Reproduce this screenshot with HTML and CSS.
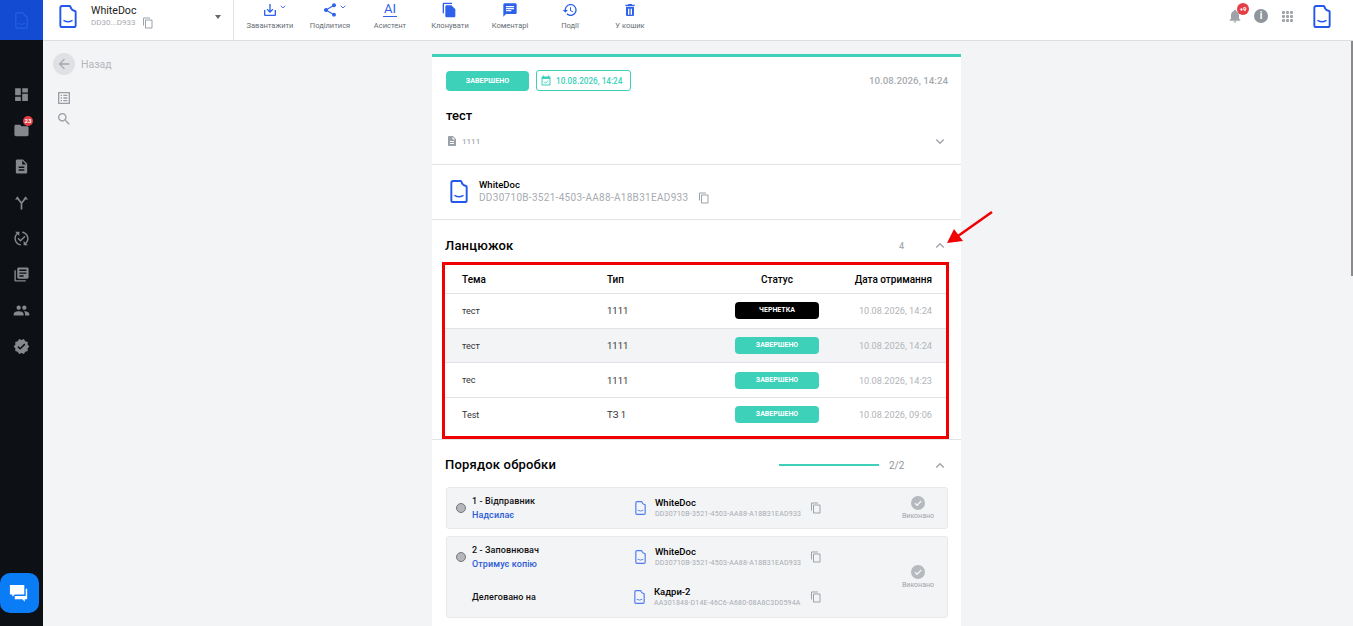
FILE: index.html
```html
<!DOCTYPE html>
<html lang="uk">
<head>
    <meta charset="UTF-8">
    <meta name="viewport" content="width=device-width, initial-scale=1.0">
    <title>WhiteDoc</title>
    <link rel="stylesheet" href="styles.css">
</head>
<body>
    <svg class="sprite" xmlns="http://www.w3.org/2000/svg">
        <symbol id="i-logo" viewBox="0 0 18 24"><path d="M3 1h7.5c.5 0 .8.3 1 .8.6 2.4 2.4 4 4.7 4.5.5.1.8.4.8.9V21a2 2 0 0 1-2 2H3a2 2 0 0 1-2-2V3a2 2 0 0 1 2-2z" fill="none" stroke="currentColor" stroke-width="2"/><path d="M4.8 16.2q4.2 2.4 8.4 0" fill="none" stroke="currentColor" stroke-width="1.5" stroke-linecap="round"/></symbol>
        <symbol id="i-copy" viewBox="0 0 24 24"><path d="M16 1H4c-1.1 0-2 .9-2 2v14h2V3h12V1zm3 4H8c-1.1 0-2 .9-2 2v14c0 1.1.9 2 2 2h11c1.1 0 2-.9 2-2V7c0-1.1-.9-2-2-2zm0 16H8V7h11v14z"/></symbol>
        <symbol id="i-doc" viewBox="0 0 24 24"><path d="M14 2H6c-1.1 0-1.99.9-1.99 2L4 20c0 1.1.89 2 1.99 2H18c1.1 0 2-.9 2-2V8l-6-6zm2 16H8v-2h8v2zm0-4H8v-2h8v2zm-3-5V3.5L18.5 9H13z"/></symbol>
        <symbol id="i-down" viewBox="0 0 12 8"><path d="M1.5 1.5L6 6l4.5-4.5" fill="none" stroke="currentColor" stroke-width="1.8"/></symbol>
        <symbol id="i-up" viewBox="0 0 12 8"><path d="M1.5 6.5L6 2l4.5 4.5" fill="none" stroke="currentColor" stroke-width="1.8"/></symbol>
        <symbol id="i-done" viewBox="0 0 14 14"><circle cx="7" cy="7" r="7"/><path d="M4 7.2l2.1 2.1L10.2 5" fill="none" stroke="#f3f4f6" stroke-width="1.3"/></symbol>
    </svg>

    <div class="app">
        <aside class="sidebar">
            <div class="side-logo"><svg class="side-logo-icon"><use href="#i-logo"/></svg></div>
            <nav class="side-nav">
                <a class="side-link"><svg viewBox="0 0 24 24"><path d="M3 13h8V3H3v10zm0 8h8v-6H3v6zm10 0h8V11h-8v10zm0-18v6h8V3h-8z"/></svg></a>
                <a class="side-link"><svg viewBox="0 0 24 24"><path d="M10 4H4c-1.1 0-1.99.9-1.99 2L2 18c0 1.1.9 2 2 2h16c1.1 0 2-.9 2-2V8c0-1.1-.9-2-2-2h-8l-2-2z"/></svg><span class="side-badge">23</span></a>
                <a class="side-link"><svg viewBox="0 0 24 24"><use href="#i-doc"/></svg></a>
                <a class="side-link"><svg viewBox="0 0 24 24"><path d="M12 22v-9M12 13L6.5 6M12 13l5.5-7" fill="none" stroke="currentColor" stroke-width="2.4"/><path d="M3 8l3-5 3 4zM15 7l3-4 3 5z"/></svg></a>
                <a class="side-link"><svg viewBox="0 0 24 24"><path d="M17.66 9.53l-7.07 7.07-4.24-4.24 1.41-1.41 2.83 2.83 5.66-5.66 1.41 1.41zM4 12c0-2.33 1.02-4.42 2.62-5.88L9 8.5v-6H3l2.2 2.2C3.24 6.52 2 9.11 2 12c0 5.19 3.95 9.45 9 9.95v-2.02C7.06 19.44 4 16.07 4 12zm18 0c0-5.19-3.95-9.45-9-9.95v2.02c3.94.49 7 3.86 7 7.93 0 2.33-1.02 4.42-2.62 5.88L15 15.5v6h6l-2.2-2.2c1.96-1.82 3.2-4.41 3.2-7.3z"/></svg></a>
                <a class="side-link"><svg viewBox="0 0 24 24"><path d="M4 6H2v14c0 1.1.9 2 2 2h14v-2H4V6zm16-4H8c-1.1 0-2 .9-2 2v12c0 1.1.9 2 2 2h12c1.1 0 2-.9 2-2V4c0-1.1-.9-2-2-2zm-1 9H9V9h10v2zm-4 4H9v-2h6v2zm4-8H9V5h10v2z"/></svg></a>
                <a class="side-link"><svg viewBox="0 0 24 24"><path d="M16 11c1.66 0 2.99-1.34 2.99-3S17.66 5 16 5c-1.66 0-3 1.34-3 3s1.34 3 3 3zm-8 0c1.66 0 2.99-1.34 2.99-3S9.66 5 8 5C6.34 5 5 6.34 5 8s1.34 3 3 3zm0 2c-2.33 0-7 1.17-7 3.5V19h14v-2.5c0-2.33-4.67-3.5-7-3.5zm8 0c-.29 0-.62.02-.97.05 1.16.84 1.97 1.97 1.97 3.45V19h6v-2.5c0-2.33-4.67-3.5-7-3.5z"/></svg></a>
                <a class="side-link"><svg viewBox="0 0 24 24"><path d="M23 12l-2.44-2.79.34-3.69-3.61-.82-1.89-3.2L12 2.96 8.6 1.5 6.71 4.69 3.1 5.5l.34 3.7L1 12l2.44 2.79-.34 3.7 3.61.82L8.6 22.5l3.4-1.47 3.4 1.46 1.89-3.19 3.61-.82-.34-3.69L23 12zm-12.91 4.72l-3.8-3.81 1.48-1.48 2.32 2.33 5.85-5.87 1.48 1.48-7.33 7.35z"/></svg></a>
            </nav>
            <button class="chat-btn"><svg viewBox="0 0 24 24"><path d="M2 3h15v10H7l-2.5 2.5V13H2z"/><path d="M18.5 7H20v11h-2.500v2.500L15 18H7v-3.500h11.500z"/></svg></button>
        </aside>

        <div class="main">
            <header class="topbar">
                <div class="doc-switch">
                    <svg class="doc-switch-logo"><use href="#i-logo"/></svg>
                    <div class="doc-switch-text">
                        <div class="doc-switch-name">WhiteDoc</div>
                        <div class="doc-switch-id">DD30...D933 <svg class="copy-icon"><use href="#i-copy"/></svg></div>
                    </div>
                    <span class="caret"></span>
                </div>
                <div class="tools">
                    <a class="tool"><span class="tool-icon"><svg viewBox="0 0 24 24"><path d="M19 12v7H5v-7H3v7c0 1.1.9 2 2 2h14c1.1 0 2-.9 2-2v-7h-2zm-6 .67l2.59-2.58L17 11.5l-5 5-5-5 1.41-1.41L11 12.67V3h2z"/></svg><svg class="tool-chev"><use href="#i-down"/></svg></span>Завантажити</a>
                    <a class="tool"><span class="tool-icon"><svg viewBox="0 0 24 24"><path d="M18 16.08c-.76 0-1.44.3-1.96.77L8.91 12.7c.05-.23.09-.46.09-.7s-.04-.47-.09-.7l7.05-4.11c.54.5 1.25.81 2.04.81 1.66 0 3-1.34 3-3s-1.34-3-3-3-3 1.34-3 3c0 .24.04.47.09.7L8.04 9.81C7.5 9.31 6.79 9 6 9c-1.66 0-3 1.34-3 3s1.34 3 3 3c.79 0 1.5-.31 2.04-.81l7.12 4.16c-.05.21-.08.43-.08.65 0 1.61 1.31 2.92 2.92 2.92 1.61 0 2.92-1.31 2.92-2.92s-1.31-2.92-2.92-2.92z"/></svg><svg class="tool-chev"><use href="#i-down"/></svg></span>Поділитися</a>
                    <a class="tool"><span class="tool-icon"><span class="tool-ai">AI</span></span>Асистент</a>
                    <a class="tool"><span class="tool-icon"><svg viewBox="0 0 24 24"><path d="M15 1H3c-1.1 0-2 .9-2 2v14h2V3h12V1zm-1 4l6 6v10c0 1.1-.9 2-2 2H6.990C5.890 23 5 22.1 5 21l.01-14c0-1.1.89-2 1.99-2h7z"/></svg></span>Клонувати</a>
                    <a class="tool"><span class="tool-icon"><svg viewBox="0 0 24 24"><path d="M20 2H4c-1.1 0-1.99.9-1.99 2L2 22l4-4h14c1.1 0 2-.9 2-2V4c0-1.1-.9-2-2-2zM6 9h12v2H6V9zm8 5H6v-2h8v2zm4-6H6V6h12v2z"/></svg></span>Коментарі</a>
                    <a class="tool"><span class="tool-icon"><svg viewBox="0 0 24 24"><path d="M13 3c-4.97 0-9 4.03-9 9H1l3.89 3.89.07.14L9 12H6c0-3.87 3.13-7 7-7s7 3.13 7 7-3.13 7-7 7c-1.93 0-3.68-.79-4.94-2.06l-1.42 1.42C8.27 19.99 10.51 21 13 21c4.97 0 9-4.03 9-9s-4.03-9-9-9zm-1 5v5l4.28 2.54.72-1.21-3.5-2.08V8H12z"/></svg></span>Події</a>
                    <a class="tool"><span class="tool-icon"><svg viewBox="0 0 24 24"><path d="M6 19c0 1.1.9 2 2 2h8c1.1 0 2-.9 2-2V7H6v12zm3-9h2v9H9v-9zm4 0h2v9h-2v-9zM19 4h-3.5l-1-1h-5l-1 1H5v2h14V4z" fill-rule="evenodd"/></svg></span>У кошик</a>
                </div>
                <div class="top-right">
                    <span class="top-bell"><svg viewBox="0 0 24 24"><path d="M12 22c1.1 0 2-.9 2-2h-4c0 1.1.9 2 2 2zm6-6v-5c0-3.07-1.63-5.64-4.5-6.32V4c0-.83-.67-1.5-1.5-1.5s-1.5.67-1.5 1.5v.68C7.64 5.36 6 7.92 6 11v5l-2 2v1h16v-1l-2-2z"/></svg><span class="bell-badge">+9</span></span>
                    <span class="top-info">i</span>
                    <span class="top-grid"><i></i><i></i><i></i><i></i><i></i><i></i><i></i><i></i><i></i></span>
                    <svg class="top-logo"><use href="#i-logo"/></svg>
                </div>
            </header>

            <div class="content">
                <div class="back-col">
                    <div class="back-row">
                        <span class="back-circle"><svg viewBox="0 0 24 24"><path d="M20 11H7.83l5.59-5.59L12 4l-8 8 8 8 1.41-1.41L7.83 13H20v-2z"/></svg></span>
                        Назад
                    </div>
                    <svg class="back-icon back-icon-first" viewBox="0 0 24 24"><path d="M19 5v14H5V5h14m1.1-2H3.900c-.5 0-.9.4-.9.9v16.200c0 .4.4.9.9.9h16.200c.4 0 .9-.5.9-.9V3.900c0-.5-.5-.9-.9-.9zM11 7h6v2h-6V7zm0 4h6v2h-6v-2zm0 4h6v2h-6v-2zM7 7h2v2H7V7zm0 4h2v2H7v-2zm0 4h2v2H7v-2z"/></svg>
                    <svg class="back-icon" viewBox="0 0 24 24"><path d="M15.5 14h-.79l-.28-.27C15.41 12.59 16 11.11 16 9.5 16 5.91 13.09 3 9.5 3S3 5.91 3 9.5 5.91 16 9.5 16c1.61 0 3.09-.59 4.23-1.57l.27.28v.79l5 4.99L20.49 19l-4.99-5zm-6 0C7.01 14 5 11.99 5 9.5S7.01 5 9.5 5 14 7.01 14 9.5 11.99 14 9.5 14z"/></svg>
                </div>

                <div class="card-col">
                    <div class="card">
                        <section class="sec sec-head">
                            <div class="head-top">
                                <span class="badge badge-main">ЗАВЕРШЕНО</span>
                                <span class="date-box"><svg viewBox="0 0 24 24"><path d="M19 3h-1V1h-2v2H8V1H6v2H5c-1.1 0-2 .9-2 2v14c0 1.1.9 2 2 2h14c1.1 0 2-.9 2-2V5c0-1.1-.9-2-2-2zm0 16H5V8h14v11z"/><path d="M8 13.5l3 3 5-5" fill="none" stroke="currentColor" stroke-width="2"/></svg>10.08.2026, 14:24</span>
                                <span class="head-date">10.08.2026, 14:24</span>
                            </div>
                            <h1 class="doc-title">тест</h1>
                            <div class="head-type">
                                <svg class="type-icon"><use href="#i-doc"/></svg>
                                <span>1111</span>
                                <svg class="chev"><use href="#i-down"/></svg>
                            </div>
                        </section>

                        <section class="sec sec-org">
                            <svg class="org-logo"><use href="#i-logo"/></svg>
                            <div>
                                <div class="org-name">WhiteDoc</div>
                                <div class="org-id">DD30710B-3521-4503-AA88-A18B31EAD933 <svg class="copy-icon"><use href="#i-copy"/></svg></div>
                            </div>
                        </section>

                        <section class="sec sec-chain">
                            <div class="sec-title-row">
                                <h2 class="sec-title">Ланцюжок</h2>
                                <span class="chain-count">4</span>
                                <svg class="chev"><use href="#i-up"/></svg>
                            </div>
                            <div class="chain-box">
                                <div class="chain-row chain-head">
                                    <span>Тема</span><span>Тип</span><span class="col-status">Статус</span><span class="col-date">Дата отримання</span>
                                </div>
                                <div class="chain-row">
                                    <span>тест</span><span class="col-type">1111</span><span class="col-status"><span class="badge badge-draft">ЧЕРНЕТКА</span></span><span class="col-date">10.08.2026, 14:24</span>
                                </div>
                                <div class="chain-row chain-current">
                                    <span>тест</span><span class="col-type">1111</span><span class="col-status"><span class="badge badge-done">ЗАВЕРШЕНО</span></span><span class="col-date">10.08.2026, 14:24</span>
                                </div>
                                <div class="chain-row">
                                    <span>тес</span><span class="col-type">1111</span><span class="col-status"><span class="badge badge-done">ЗАВЕРШЕНО</span></span><span class="col-date">10.08.2026, 14:23</span>
                                </div>
                                <div class="chain-row">
                                    <span>Test</span><span class="col-type">ТЗ 1</span><span class="col-status"><span class="badge badge-done">ЗАВЕРШЕНО</span></span><span class="col-date">10.08.2026, 09:06</span>
                                </div>
                            </div>
                        </section>

                        <section class="sec sec-order">
                            <div class="sec-title-row">
                                <h2 class="sec-title">Порядок обробки</h2>
                                <span class="order-bar"></span>
                                <span class="order-count">2/2</span>
                                <svg class="chev"><use href="#i-up"/></svg>
                            </div>
                            <div class="step">
                                <span class="step-dot"></span>
                                <div class="step-main">
                                    <div class="step-line">
                                        <div class="step-who"><div class="step-role">1 - Відправник</div><div class="step-action">Надсилає</div></div>
                                        <svg class="step-logo"><use href="#i-logo"/></svg>
                                        <div class="step-org"><div class="step-org-name">WhiteDoc</div><div class="step-org-id">DD30710B-3521-4503-AA88-A18B31EAD933</div></div>
                                        <svg class="copy-icon step-copy"><use href="#i-copy"/></svg>
                                    </div>
                                </div>
                                <div class="step-state"><svg><use href="#i-done"/></svg>Виконано</div>
                            </div>
                            <div class="step">
                                <span class="step-dot"></span>
                                <div class="step-main">
                                    <div class="step-line">
                                        <div class="step-who"><div class="step-role">2 - Заповнювач</div><div class="step-action">Отримує копію</div></div>
                                        <svg class="step-logo"><use href="#i-logo"/></svg>
                                        <div class="step-org"><div class="step-org-name">WhiteDoc</div><div class="step-org-id">DD30710B-3521-4503-AA88-A18B31EAD933</div></div>
                                        <svg class="copy-icon step-copy"><use href="#i-copy"/></svg>
                                    </div>
                                    <div class="step-line step-line-sub">
                                        <div class="step-who"><div class="step-role">Делеговано на</div></div>
                                        <svg class="step-logo"><use href="#i-logo"/></svg>
                                        <div class="step-org"><div class="step-org-name">Кадри-2</div><div class="step-org-id">AA301848-D14E-46C6-A680-08A8C3D0594A</div></div>
                                        <svg class="copy-icon step-copy"><use href="#i-copy"/></svg>
                                    </div>
                                </div>
                                <div class="step-state"><svg><use href="#i-done"/></svg>Виконано</div>
                            </div>
                        </section>
                    </div>
                    <svg class="red-arrow" viewBox="0 0 50 40"><path d="M48 2L14 26" stroke="#f00000" stroke-width="2.5" fill="none"/><path d="M3 33l7-14 9 12z" fill="#f00000"/></svg>
                </div>
                <div class="right-col"></div>
            </div>
        </div>
        <div class="scroll-thumb"></div>
    </div>
</body>
</html>
```

FILE: styles.css
```css
* {
    box-sizing: border-box;
}
html, body {
    margin: 0;
    height: 100%;
    overflow: hidden;
}
body {
    font-family: Roboto, "Liberation Sans", sans-serif;
    background-color: #f3f4f6;
    color: #000;
}
h1, h2 {
    margin: 0;
}
svg {
    fill: currentColor;
    display: block;
    flex: none;
}
.sprite {
    width: 0;
    height: 0;
    position: absolute;
}
.app {
    display: flex;
    height: 100vh;
    position: relative;
}

/* sidebar */
.sidebar {
    width: 43px;
    flex: none;
    background-color: #0d1116;
    position: relative;
}
.side-logo {
    height: 40px;
    background-color: #134bd2;
    display: flex;
    align-items: center;
    justify-content: center;
}
.side-logo-icon {
    width: 13px;
    height: 17px;
    color: #1f5fe6;
}
.side-nav {
    padding-top: 36px;
    display: flex;
    flex-direction: column;
}
.side-link {
    height: 36px;
    display: flex;
    align-items: center;
    justify-content: center;
    color: #85888c;
    position: relative;
}
.side-link svg {
    width: 17px;
    height: 17px;
}
.side-badge {
    position: absolute;
    left: 23px;
    top: 4px;
    width: 10px;
    height: 10px;
    border-radius: 50%;
    background-color: #e53e46;
    color: #fff;
    font-size: 6px;
    font-weight: 700;
    line-height: 10px;
    text-align: center;
}
.chat-btn {
    position: absolute;
    left: 0;
    top: 573px;
    width: 39px;
    height: 40px;
    border: none;
    padding: 0;
    border-radius: 10px;
    background-color: #0a7cf5;
    color: #fff;
    display: flex;
    align-items: center;
    justify-content: center;
}
.chat-btn svg {
    width: 23px;
    height: 23px;
}

/* top bar */
.main {
    flex: 1;
    min-width: 0;
    display: flex;
    flex-direction: column;
}
.topbar {
    height: 41px;
    flex: none;
    display: flex;
    background-color: #fff;
    border-bottom: 1px solid #dcdee1;
}
.doc-switch {
    width: 191px;
    flex: none;
    display: flex;
    align-items: center;
    padding: 0 0 8px 16px;
    border-right: 1px solid #e2e3e6;
    position: relative;
}
.doc-switch-logo {
    width: 18px;
    height: 23px;
    color: #2458ea;
}
.doc-switch-text {
    margin-left: 14px;
}
.doc-switch-name {
    font-size: 10.6px;
    line-height: 13px;
    color: #222;
}
.doc-switch-id {
    display: flex;
    align-items: center;
    font-size: 8px;
    line-height: 12px;
    color: #a7abb1;
    gap: 6px;
}
.copy-icon {
    width: 12px;
    height: 12px;
    color: #9ea3a9;
}
.caret {
    position: absolute;
    left: 172px;
    top: 15px;
    border: 3.5px solid transparent;
    border-top: 4px solid #666;
    border-bottom: none;
}
.tools {
    display: flex;
    padding-left: 6px;
}
.tool {
    width: 60px;
    display: flex;
    flex-direction: column;
    align-items: center;
    font-size: 7.5px;
    line-height: 10px;
    color: #666d75;
}
.tool-icon {
    height: 20px;
    padding-top: 2px;
    margin-bottom: 1px;
    display: flex;
    color: #2f62ea;
    position: relative;
}
.tool-icon svg {
    width: 16px;
    height: 16px;
}
.tool-icon .tool-chev {
    position: absolute;
    left: 100%;
    margin-left: 2px;
    top: 5px;
    width: 6px;
    height: 4px;
}
.tool-ai {
    font-size: 13px;
    line-height: 14px;
    height: 15px;
    width: 14px;
    text-align: center;
    border-bottom: 1px solid #2f62ea;
}
.top-right {
    margin-left: auto;
    display: flex;
    align-items: center;
    padding: 0 22px 8px 0;
}
.top-bell {
    position: relative;
    color: #9ea3a9;
}
.top-bell svg {
    width: 16px;
    height: 16px;
}
.bell-badge {
    position: absolute;
    left: 10px;
    top: -5px;
    width: 12px;
    height: 12px;
    border-radius: 50%;
    background-color: #e53e46;
    color: #fff;
    font-size: 6px;
    font-weight: 700;
    line-height: 12px;
    text-align: center;
}
.top-info {
    width: 14px;
    height: 14px;
    margin-left: 11px;
    border-radius: 50%;
    background-color: #8f959c;
    color: #fff;
    font-size: 10px;
    font-weight: 700;
    line-height: 14px;
    text-align: center;
}
.top-grid {
    width: 11px;
    margin-left: 14px;
    display: grid;
    grid-template-columns: repeat(3, 3px);
    gap: 1px;
}
.top-grid i {
    height: 3px;
    background-color: #a0a4a9;
    border-radius: 1px;
}
.top-logo {
    width: 18px;
    height: 23px;
    margin-left: 20px;
    color: #2458ea;
}

/* page */
.content {
    flex: 1;
    min-height: 0;
    display: grid;
    grid-template-columns: 1fr 529px 1fr;
    padding-right: 3px;
    overflow: hidden;
}
.back-col {
    padding: 12px 0 0 10px;
}
.back-row {
    display: flex;
    align-items: center;
    gap: 6px;
    font-size: 10.5px;
    color: #b3b6bb;
}
.back-circle {
    width: 22px;
    height: 22px;
    border-radius: 50%;
    background-color: #dfe1e4;
    color: #a3a7ac;
    display: flex;
    align-items: center;
    justify-content: center;
}
.back-circle svg {
    width: 16px;
    height: 16px;
}
.back-icon {
    width: 16px;
    height: 16px;
    margin: 5px 0 0 3px;
    color: #9a9ea4;
}
.back-icon-first {
    margin-top: 15px;
}
.card-col {
    padding-top: 13px;
    position: relative;
}
.card {
    background-color: #fff;
    border-top: 3px solid #3dd1ba;
    min-height: 600px;
}
.sec {
    border-bottom: 1px solid #e2e3e6;
}
.red-arrow {
    position: absolute;
    left: 512px;
    top: 169px;
    width: 50px;
    height: 40px;
}

/* header of the card */
.sec-head {
    height: 108px;
    padding: 13px 13px 0 14px;
}
.head-top {
    display: flex;
    align-items: center;
}
.badge {
    display: inline-block;
    border-radius: 4px;
    color: #fff;
    font-size: 7px;
    font-weight: 700;
    text-align: center;
}
.badge-main {
    width: 83px;
    height: 20px;
    line-height: 19px;
    background-color: #3dd1ba;
    font-size: 7.2px;
}
.date-box {
    width: 95px;
    height: 21px;
    margin-left: 7px;
    border: 1px solid #3dd1ba;
    border-radius: 3px;
    color: #3dd1ba;
    font-size: 8.2px;
    font-weight: 500;
    display: flex;
    align-items: center;
    gap: 4px;
    padding-left: 3px;
}
.date-box svg {
    width: 12px;
    height: 12px;
}
.head-date {
    margin-left: auto;
    font-size: 9.75px;
    font-weight: 500;
    color: #a7abb1;
}
.doc-title {
    margin-top: 17px;
    font-size: 13px;
    line-height: 16px;
    font-weight: 500;
}
.head-type {
    display: flex;
    align-items: center;
    margin-top: 11px;
    gap: 4px;
    font-size: 8px;
    font-weight: 500;
    color: #a7abb1;
}
.type-icon {
    width: 12px;
    height: 12px;
    color: #9aa0a7;
}
.chev {
    width: 10px;
    height: 7px;
    color: #a2a7ad;
}
.head-type .chev {
    margin-left: auto;
    margin-right: 3px;
}

/* organisation */
.sec-org {
    height: 55px;
    display: flex;
    align-items: center;
    padding: 0 0 2px 18px;
    gap: 11px;
}
.org-logo {
    width: 18px;
    height: 23px;
    color: #2458ea;
}
.org-name {
    font-size: 9.5px;
    line-height: 13px;
    font-weight: 500;
}
.org-id {
    display: flex;
    align-items: center;
    gap: 10px;
    font-size: 10px;
    line-height: 13px;
    letter-spacing: .3px;
    color: #a7abb1;
}

/* sections with a title */
.sec-title-row {
    display: flex;
    align-items: center;
}
.sec-title {
    font-size: 13px;
    line-height: 16px;
    font-weight: 500;
    letter-spacing: .2px;
}
.sec-title-row .chev {
    margin-right: 3px;
}
.sec-chain {
    padding: 18px 0 0 0;
    height: 220px;
}
.sec-chain .sec-title-row {
    padding: 0 13px 0 13px;
    height: 15px;
}
.chain-count {
    margin-left: auto;
    margin-right: 31px;
    font-size: 9px;
    font-weight: 500;
    color: #a7abb1;
}
.chain-box {
    margin: 9px 12px 0 10px;
    height: 177px;
    border: 3px solid #f00000;
}
.chain-row {
    display: grid;
    grid-template-columns: 145px 1fr 84px 113px;
    align-items: center;
    height: 34.7px;
    padding: 0 14px 0 17px;
    border-top: 1px solid #e2e3e6;
    font-size: 9px;
    color: #333;
}
.chain-head {
    height: 28px;
    border-top: none;
    font-size: 10px;
    font-weight: 500;
    color: #000;
}
.chain-current {
    background-color: #f3f4f6;
}
.col-type {
    font-size: 9.5px;
}
.col-status {
    text-align: center;
    justify-self: stretch;
}
.col-date {
    text-align: right;
    font-size: 9.2px;
    color: #b1b4b9;
}
.chain-head .col-date {
    font-size: 10px;
    color: #000;
}
.chain-row .badge {
    display: block;
    height: 17px;
    line-height: 16px;
}
.badge-draft {
    background-color: #000;
}
.badge-done {
    background-color: #3dd1ba;
}

/* order of processing */
.sec-order {
    border-bottom: none;
    padding: 17px 13px 0 14px;
}
.sec-order .sec-title-row {
    margin-bottom: 14px;
    margin-left: -1px;
}
.order-bar {
    width: 100px;
    height: 2px;
    margin-left: auto;
    background-color: #3dd1ba;
}
.order-count {
    width: 56px;
    padding-left: 10px;
    font-size: 10px;
    color: #8f959c;
}
.step {
    display: flex;
    align-items: center;
    background-color: #f3f4f6;
    border: 1px solid #e8e9eb;
    border-radius: 3px;
    margin-bottom: 7px;
    padding: 0 0 0 9px;
    position: relative;
}
.step-dot {
    width: 10px;
    height: 10px;
    border-radius: 50%;
    background-color: #b3b6bb;
    border: 1px solid #777;
    align-self: flex-start;
    margin-top: 15px;
}
.step-main {
    flex: 1;
    min-width: 0;
    padding-left: 6px;
}
.step-line {
    display: flex;
    align-items: center;
    height: 40px;
}
.step-who {
    width: 163px;
    flex: none;
}
.step-role {
    font-size: 9px;
    line-height: 13px;
    font-weight: 500;
    color: #111;
    letter-spacing: .1px;
}
.step-action {
    font-size: 9px;
    line-height: 14px;
    font-weight: 500;
    color: #2a5bd8;
    letter-spacing: .1px;
}
.step-logo {
    width: 11px;
    height: 14px;
    color: #4f7bf0;
}
.step-line-sub .step-logo {
    margin-left: -1px;
}
.step-org {
    margin-left: 9px;
}
.step-org-name {
    font-size: 9.5px;
    line-height: 13px;
    font-weight: 500;
}
.step-org-id {
    font-size: 7px;
    line-height: 11px;
    letter-spacing: .2px;
    color: #a7abb1;
}
.step-copy {
    margin-left: 9px;
}
.step-state {
    width: 50px;
    flex: none;
    display: flex;
    flex-direction: column;
    align-items: center;
    font-size: 7px;
    line-height: 10px;
    color: #9ea3a9;
    margin-right: 4px;
}
.step-state svg {
    width: 14px;
    height: 14px;
    color: #b6b9be;
    margin-bottom: 1px;
}

/* scrollbar thumb */
.scroll-thumb {
    position: absolute;
    right: 0;
    top: 41px;
    width: 2px;
    height: 235px;
    background-color: #8a8a8a;
}
```
